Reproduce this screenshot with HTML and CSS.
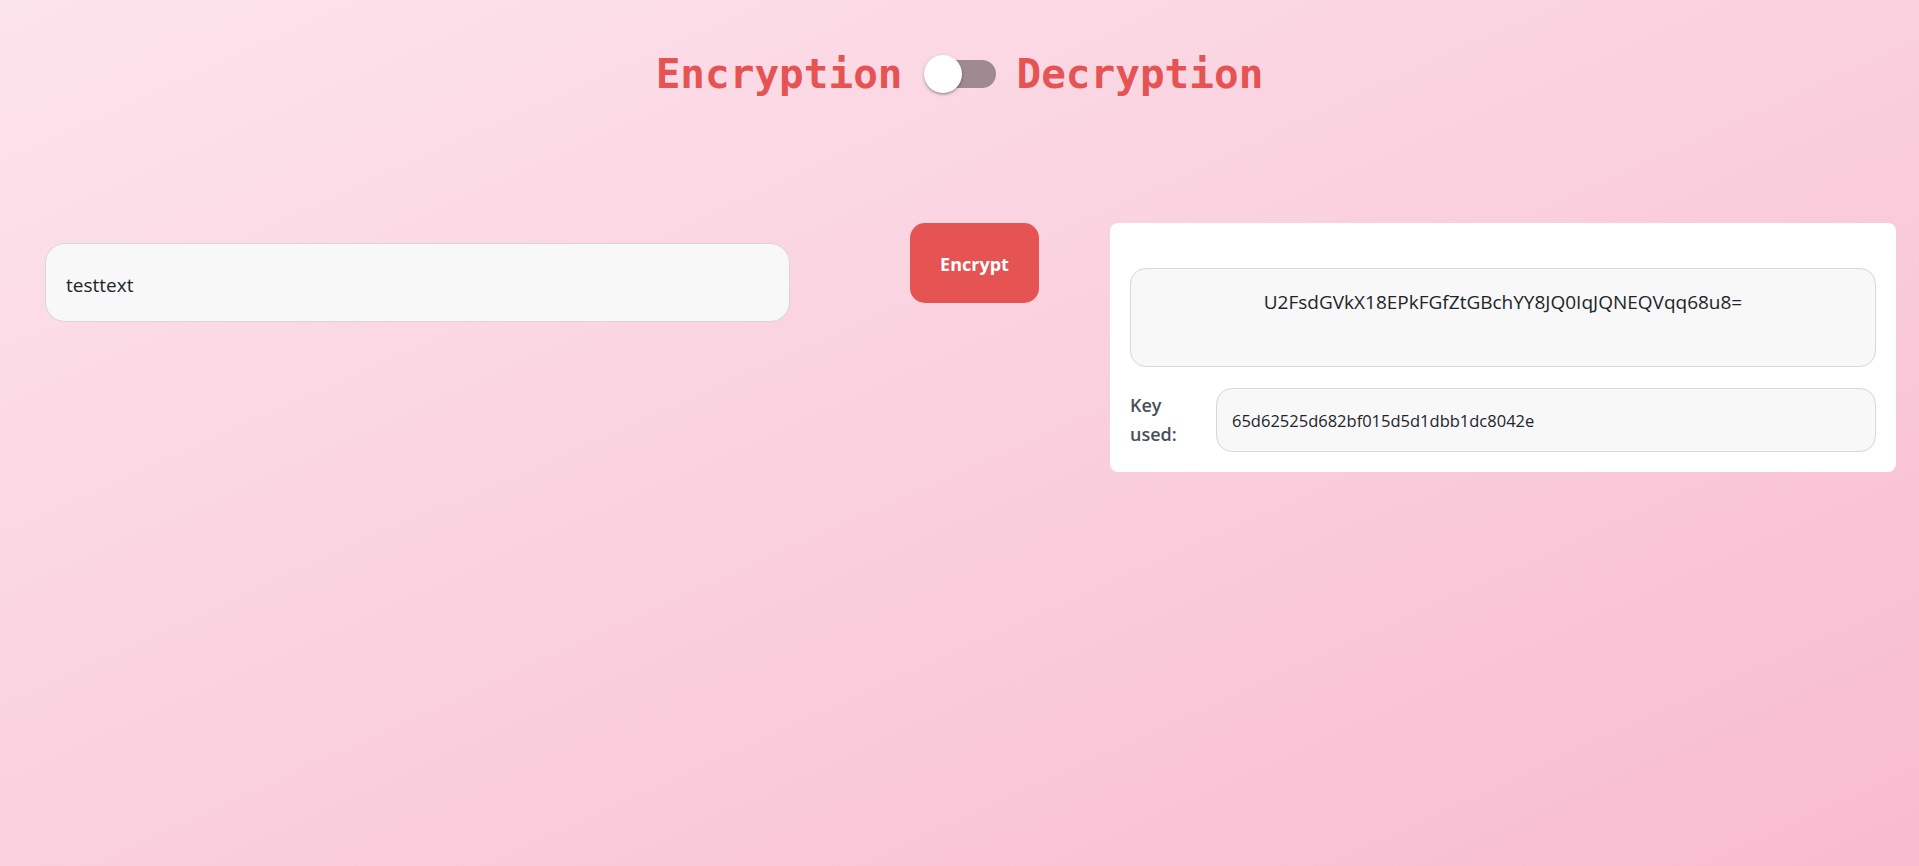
FILE: index.html
```html
<!DOCTYPE html>
<html lang="en">
<head>
<meta charset="utf-8">
<title>Encryption / Decryption</title>
<link rel="stylesheet" href="styles.css">
</head>
<body>
<header class="mode-bar">
  <span class="mode-label">Encryption</span>
  <span class="switch" role="switch" aria-checked="false">
    <span class="switch-track"></span>
    <span class="switch-thumb"></span>
  </span>
  <span class="mode-label">Decryption</span>
</header>
<main class="workspace">
  <div class="input-col">
    <div class="text-input">testtext</div>
  </div>
  <button class="action-btn" type="button">Encrypt</button>
  <section class="result-card">
    <div class="cipher-box">U2FsdGVkX18EPkFGfZtGBchYY8JQ0IqJQNEQVqq68u8=</div>
    <div class="key-row">
      <span class="key-label">Key used:</span>
      <div class="key-box">65d62525d682bf015d5d1dbb1dc8042e</div>
    </div>
  </section>
</main>
</body>
</html>
```

FILE: styles.css
```css
* { box-sizing: border-box; }

html, body {
  margin: 0;
  padding: 0;
}

body {
  min-height: 100vh;
  background: linear-gradient(to bottom right, #fce4ec, #f8bbd0);
  font-family: "Open Sans", "Noto Sans", sans-serif;
  color: #212529;
}

.mode-bar {
  display: flex;
  justify-content: center;
  align-items: center;
  gap: 21px;
  padding-top: 50px;
  height: 97px;
}

.mode-label {
  font-family: "DejaVu Sans Mono", monospace;
  font-size: 41px;
  font-weight: 700;
  line-height: 48px;
  color: #e55353;
}

.switch {
  position: relative;
  width: 72px;
  height: 38px;
  display: block;
}

.switch-track {
  position: absolute;
  left: 2px;
  top: 5px;
  width: 70px;
  height: 28px;
  border-radius: 14px;
  background: #9e8a90;
}

.switch-thumb {
  position: absolute;
  left: 0;
  top: 0;
  width: 38px;
  height: 38px;
  border-radius: 50%;
  background: #ffffff;
  box-shadow: 0 2px 2px rgba(0,0,0,0.2), 0 1px 4px rgba(0,0,0,0.14);
}

.workspace {
  display: flex;
  align-items: flex-start;
  padding: 0 23px 0 45px;
  margin-top: 126px;
}

.input-col {
  width: 745px;
  padding-top: 20px;
}

.text-input {
  height: 79px;
  display: flex;
  align-items: center;
  padding: 4px 20px 0;
  background: #f8f8f8;
  border: 1px solid #d6d6dc;
  border-radius: 20px;
  font-size: 19px;
  color: #212529;
}

.action-btn {
  margin-left: 120px;
  width: 129px;
  height: 80px;
  border: none;
  border-radius: 15px;
  background: #e55353;
  color: #ffffff;
  font-family: "Open Sans", "Noto Sans", sans-serif;
  font-weight: 700;
  font-size: 18px;
  padding: 2px 0 0;
}

.result-card {
  margin-left: 71px;
  width: 786px;
  background: #ffffff;
  border-radius: 8px;
  padding: 45px 20px 20px;
}

.cipher-box {
  height: 99px;
  background: #f8f8f8;
  border: 1px solid #d6d6dc;
  border-radius: 16px;
  padding: 20px 16px 16px;
  text-align: center;
  font-size: 19px;
  line-height: 27px;
  color: #212529;
}

.key-row {
  display: flex;
  align-items: center;
  margin-top: 21px;
}

.key-label {
  width: 70px;
  margin-right: 16px;
  font-size: 18px;
  font-weight: 600;
  line-height: 29px;
  color: #4a5059;
}

.key-box {
  flex: 1;
  height: 64px;
  display: flex;
  align-items: center;
  padding: 0 15px;
  background: #f8f8f8;
  border: 1px solid #d6d6dc;
  border-radius: 16px;
  font-size: 16.5px;
  color: #212529;
}
```
